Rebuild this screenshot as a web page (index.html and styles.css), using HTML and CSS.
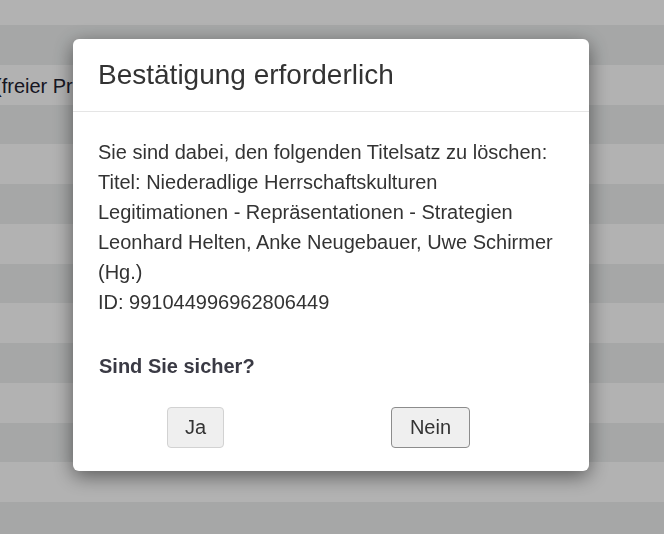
FILE: index.html
```html
<!DOCTYPE html>
<html lang="de">
<head>
<meta charset="utf-8">
<title>Bestätigung erforderlich</title>
<link rel="stylesheet" href="styles.css">
</head>
<body>
<div class="page">
  <div class="topbar"></div>
  <div class="row odd"></div>
  <div class="row even"><span class="cell">(freier Prüfungsvermerk</span></div>
  <div class="row odd"></div>
  <div class="row even"></div>
  <div class="row odd"></div>
  <div class="row even"></div>
  <div class="row odd"></div>
  <div class="row even"></div>
  <div class="row odd"></div>
  <div class="row even"></div>
  <div class="row odd"></div>
  <div class="row even"></div>
  <div class="row odd"></div>
</div>
<div class="backdrop">
  <div class="modal">
    <div class="modal-header">
      <h4 class="modal-title">Bestätigung erforderlich</h4>
    </div>
    <div class="modal-body">
      <p class="info">Sie sind dabei, den folgenden Titelsatz zu löschen:<br>
      Titel: Niederadlige Herrschaftskulturen<br>
      Legitimationen - Repräsentationen - Strategien<br>
      Leonhard Helten, Anke Neugebauer, Uwe Schirmer<br>
      (Hg.)<br>
      ID: 991044996962806449</p>
      <p class="question">Sind Sie sicher?</p>
      <div class="actions">
        <button class="btn btn-yes" type="button">Ja</button>
        <button class="btn btn-no" type="button">Nein</button>
      </div>
    </div>
  </div>
</div>
</body>
</html>
```
FILE: styles.css
```css
html, body {
  margin: 0;
  padding: 0;
  height: 100%;
  overflow: hidden;
}
body {
  font-family: "Liberation Sans", Arial, sans-serif;
  color: #222;
  background: #fff;
}
.page {
  display: flex;
  flex-direction: column;
}
.topbar {
  height: 25px;
  background: #ffffff;
}
.row {
  height: 39.75px;
  display: flex;
  align-items: center;
  overflow: hidden;
  white-space: nowrap;
}
.row.odd {
  background: #eef0f0;
}
.row.even {
  background: #ffffff;
}
.cell {
  font-size: 20px;
  color: #222230;
  text-indent: -5px;
  display: block;
  padding-top: 3px;
}
.backdrop {
  position: fixed;
  inset: 0;
  background: rgba(0, 0, 0, 0.3);
  display: flex;
  justify-content: center;
  align-items: flex-start;
  padding-right: 2px;
}
.modal {
  margin-top: 39px;
  width: 516px;
  background: #fff;
  border-radius: 6px;
  box-shadow: 0 5px 20px rgba(0, 0, 0, 0.5);
  color: #333;
}
.modal-header {
  padding: 19px 25px;
  border-bottom: 1px solid #e5e5e5;
}
.modal-title {
  margin: 0;
  font-size: 28px;
  font-weight: normal;
  line-height: 34px;
  color: #333;
}
.modal-body {
  padding: 25px 25px 23px;
}
.info {
  margin: 0;
  font-size: 20px;
  line-height: 30px;
}
.question {
  margin: 34px 0 0 1px;
  font-size: 20px;
  line-height: 30px;
  font-weight: bold;
  color: #3a3a44;
}
.actions {
  display: flex;
  gap: 167px;
  margin: 26px 0 0 69px;
}
.btn {
  font-family: "Liberation Sans", Arial, sans-serif;
  font-size: 20px;
  line-height: 23px;
  height: 41px;
  padding: 8px 0;
  text-align: center;
  background: #efefef;
  color: #333;
  border-radius: 4px;
  cursor: pointer;
}
.btn-yes {
  width: 57px;
  border: 1px solid #d2d2d2;
}
.btn-no {
  width: 79px;
  border: 1px solid #8c8c8c;
}
```
